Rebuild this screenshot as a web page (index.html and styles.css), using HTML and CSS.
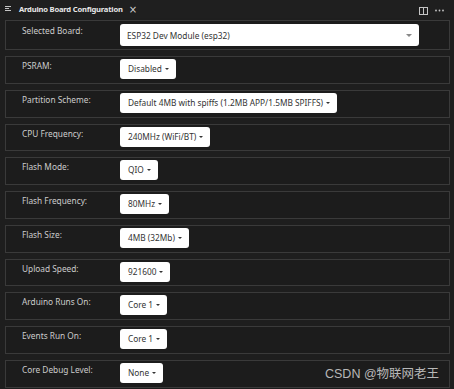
FILE: index.html
```html
<!DOCTYPE html>
<html>
<head>
<meta charset="utf-8">
<link rel="stylesheet" href="styles.css">
</head>
<body>
<div class="tabbar">
  <div class="tab">
    <svg class="tab-icon" width="6" height="6" viewBox="0 0 6 6"><path d="M0 0.5H6M0 2.5H4M0 4.5H6" stroke="#c5c5c5" stroke-width="1"/></svg>
    <span class="tab-title">Arduino Board Configuration</span>
    <span class="tab-close">×</span>
  </div>
  <div class="tab-actions">
    <svg width="9" height="8" viewBox="0 0 9 8"><rect x="0.5" y="0.5" width="8" height="7" fill="none" stroke="#c5c5c5"/><path d="M4.5 0.5V7.5" stroke="#c5c5c5"/></svg>
    <svg width="9" height="3" viewBox="0 0 9 3"><circle cx="1" cy="1.5" r="0.9" fill="#c5c5c5"/><circle cx="4.5" cy="1.5" r="0.9" fill="#c5c5c5"/><circle cx="8" cy="1.5" r="0.9" fill="#c5c5c5"/></svg>
  </div>
</div>
<div class="content">
  <div class="row first">
    <div class="label">Selected Board:</div>
    <div class="select">ESP32 Dev Module (esp32)<span class="select-caret"></span></div>
  </div>
  <div class="row"><div class="label">PSRAM:</div><div class="btn">Disabled<span class="caret"></span></div></div>
  <div class="row"><div class="label">Partition Scheme:</div><div class="btn">Default 4MB with spiffs (1.2MB APP/1.5MB SPIFFS)<span class="caret"></span></div></div>
  <div class="row"><div class="label">CPU Frequency:</div><div class="btn">240MHz (WiFi/BT)<span class="caret"></span></div></div>
  <div class="row"><div class="label">Flash Mode:</div><div class="btn">QIO<span class="caret"></span></div></div>
  <div class="row"><div class="label">Flash Frequency:</div><div class="btn">80MHz<span class="caret"></span></div></div>
  <div class="row"><div class="label">Flash Size:</div><div class="btn">4MB (32Mb)<span class="caret"></span></div></div>
  <div class="row"><div class="label">Upload Speed:</div><div class="btn">921600<span class="caret"></span></div></div>
  <div class="row"><div class="label">Arduino Runs On:</div><div class="btn">Core 1<span class="caret"></span></div></div>
  <div class="row"><div class="label">Events Run On:</div><div class="btn">Core 1<span class="caret"></span></div></div>
  <div class="row"><div class="label">Core Debug Level:</div><div class="btn">None<span class="caret"></span></div></div>
</div>
<div class="watermark">CSDN @物联网老王</div>
</body>
</html>
```
FILE: styles.css
```css
html, body {
  margin: 0;
  padding: 0;
  background: #1e1e1e;
  overflow: hidden;
  height: 389px;
}
body {
  font-family: "Noto Sans", sans-serif;
  position: relative;
}
.tabbar {
  height: 18px;
  display: flex;
  align-items: center;
  justify-content: space-between;
  background: #1f1f1f;
}
.tab {
  display: flex;
  align-items: center;
  padding-left: 5px;
  height: 18px;
}
.tab-icon {
  margin-right: 8px;
}
.tab-title {
  color: #e8e8e8;
  font-size: 7.6px;
  letter-spacing: -0.2px;
  font-weight: bold;
}
.tab-close {
  color: #cfcfcf;
  font-size: 10px;
  margin-left: 6px;
  font-family: "DejaVu Sans", sans-serif;
}
.tab-actions {
  display: flex;
  align-items: center;
  gap: 7px;
  padding-right: 10px;
  padding-top: 3px;
}
.content {
  padding: 2px 4px 0 5px;
}
.row {
  box-sizing: border-box;
  height: 27.75px;
  margin-bottom: 6px;
  border: 1px solid #3a3a3a;
  background: #1c1c1c;
  display: flex;
  align-items: flex-start;
  padding: 2px 0 0 16px;
}
.row.first {
  height: 30px;
  padding-top: 3px;
}
.label {
  width: 98px;
  color: #cccccc;
  font-size: 8.3px;
  line-height: 14px;
  flex-shrink: 0;
}
.row.first .label {
  line-height: 13.4px;
}
.btn {
  background: #ffffff;
  color: #333333;
  border-radius: 3px;
  height: 20px;
  line-height: 20px;
  font-size: 8.3px;
  padding: 0 7px 0 8px;
  display: flex;
  align-items: center;
  white-space: nowrap;
}
.caret {
  display: inline-block;
  margin-left: 3px;
  border-left: 2px solid transparent;
  border-right: 2px solid transparent;
  border-top: 2.5px solid #333333;
}
.select {
  background: #ffffff;
  color: #333333;
  border-radius: 3px;
  height: 22px;
  width: 299px;
  box-sizing: border-box;
  font-size: 8.3px;
  padding: 0 7px 0 7px;
  display: flex;
  align-items: center;
  justify-content: space-between;
}
.select-caret {
  border-left: 3px solid transparent;
  border-right: 3px solid transparent;
  border-top: 3px solid #888888;
}
.watermark {
  position: absolute;
  left: 325px;
  top: 363px;
  color: #b8b8b8;
  font-size: 12.5px;
  font-family: "Liberation Sans", "Noto Sans CJK SC", sans-serif;
}
```
